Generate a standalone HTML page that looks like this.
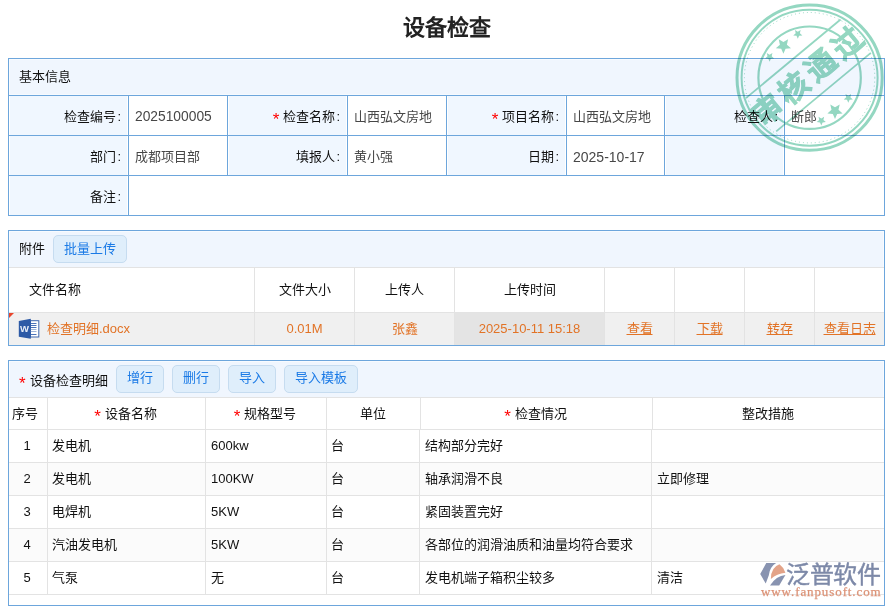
<!DOCTYPE html>
<html lang="zh-CN">
<head>
<meta charset="utf-8">
<style>
*{margin:0;padding:0;box-sizing:border-box;}
html,body{width:890px;height:607px;overflow:hidden;background:#fff;}
body{position:relative;font-family:"Liberation Sans",sans-serif;font-size:13px;color:#333;}
.a{position:absolute;}
.t{position:absolute;white-space:nowrap;line-height:16px;height:16px;margin-top:1px;}
.hl{position:absolute;height:1px;}
.vl{position:absolute;width:1px;}
.b{background:#6da6dc;}
.g{background:#e3e3e3;}
.lab{color:#111;}
.val{color:#474747;}
.req{color:#f00;font-size:17px;position:relative;top:4px;margin-right:4px;line-height:0;}
.btn{position:absolute;height:28px;top:0;border:1px solid #c6dcf0;background:#dfeefb;border-radius:5px;color:#1a7ae6;line-height:24px;text-align:center;font-size:13px;}
.org{color:#e27326;}
i{font-style:normal;margin-left:1px;}
.u{text-decoration:underline;}
</style>
</head>
<body>
<!-- title -->
<div class="t" style="left:0;width:893px;top:14px;height:26px;line-height:26px;text-align:center;font-size:22px;font-weight:bold;color:#222;">设备检查</div>

<!-- ===== panel 1 ===== -->
<div class="a" style="left:8px;top:58px;width:877px;height:158px;border:1px solid #6da6dc;background:#fff;"></div>
<div class="a" style="left:9px;top:59px;width:875px;height:36px;background:#f0f6fe;border:1px solid #f8fbff;border-bottom-color:#f6faff;"></div>
<div class="t lab" style="left:19px;top:68px;">基本信息</div>
<!-- label cells bg -->
<div class="a" style="left:10px;top:96px;width:117px;height:119px;background:#f0f7ff;"></div>
<div class="a" style="left:229px;top:96px;width:117px;height:79px;background:#f0f7ff;"></div>
<div class="a" style="left:448px;top:96px;width:117px;height:79px;background:#f0f7ff;"></div>
<div class="a" style="left:666px;top:96px;width:117px;height:79px;background:#f0f7ff;"></div>
<!-- lines -->
<div class="hl b" style="left:8px;top:95px;width:877px;"></div>
<div class="hl b" style="left:8px;top:135px;width:877px;"></div>
<div class="hl b" style="left:8px;top:175px;width:877px;"></div>
<div class="vl b" style="left:128px;top:95px;height:121px;"></div>
<div class="vl b" style="left:227px;top:95px;height:81px;"></div>
<div class="vl b" style="left:347px;top:95px;height:81px;"></div>
<div class="vl b" style="left:446px;top:95px;height:81px;"></div>
<div class="vl b" style="left:566px;top:95px;height:81px;"></div>
<div class="vl b" style="left:664px;top:95px;height:81px;"></div>
<div class="vl b" style="left:784px;top:95px;height:81px;"></div>
<!-- row1 -->
<div class="t lab" style="right:769px;top:108px;">检查编号<i>:</i></div>
<div class="t val" style="left:135px;top:108px;font-size:13.8px;">2025100005</div>
<div class="t lab" style="right:550px;top:108px;"><span class="req">*</span>检查名称<i>:</i></div>
<div class="t val" style="left:354px;top:108px;">山西弘文房地</div>
<div class="t lab" style="right:331px;top:108px;"><span class="req">*</span>项目名称<i>:</i></div>
<div class="t val" style="left:573px;top:108px;">山西弘文房地</div>
<div class="t lab" style="right:112px;top:108px;">检查人<i>:</i></div>
<div class="t val" style="left:791px;top:108px;">断郎</div>
<!-- row2 -->
<div class="t lab" style="right:769px;top:148px;">部门<i>:</i></div>
<div class="t val" style="left:135px;top:148px;">成都项目部</div>
<div class="t lab" style="right:550px;top:148px;">填报人<i>:</i></div>
<div class="t val" style="left:354px;top:148px;">黄小强</div>
<div class="t lab" style="right:331px;top:148px;">日期<i>:</i></div>
<div class="t val" style="left:573px;top:148px;font-size:14px;">2025-10-17</div>
<!-- row3 -->
<div class="t lab" style="right:769px;top:188px;">备注<i>:</i></div>

<!-- ===== panel 2 ===== -->
<div class="a" style="left:8px;top:230px;width:877px;height:116px;border:1px solid #6da6dc;background:#fff;"></div>
<div class="a" style="left:9px;top:231px;width:875px;height:36px;background:#f0f6fe;border:1px solid #f8fbff;border-bottom:0;"></div>
<div class="t lab" style="left:19px;top:240px;">附件</div>
<div class="btn" style="left:53px;top:235px;width:74px;line-height:26px;">批量上传</div>
<div class="hl g" style="left:9px;top:267px;width:875px;"></div>
<div class="a" style="left:9px;top:313px;width:875px;height:32px;background:#f0f0f0;"></div>
<div class="a" style="left:455px;top:313px;width:149px;height:32px;background:#e4e4e4;"></div>
<div class="hl g" style="left:9px;top:312px;width:875px;"></div>
<div class="vl g" style="left:254px;top:267px;height:78px;"></div>
<div class="vl g" style="left:354px;top:267px;height:78px;"></div>
<div class="vl g" style="left:454px;top:267px;height:78px;"></div>
<div class="vl g" style="left:604px;top:267px;height:78px;"></div>
<div class="vl g" style="left:674px;top:267px;height:78px;"></div>
<div class="vl g" style="left:744px;top:267px;height:78px;"></div>
<div class="vl g" style="left:814px;top:267px;height:78px;"></div>
<div class="t lab" style="left:29px;top:281px;">文件名称</div>
<div class="t lab" style="left:255px;width:99px;text-align:center;top:281px;">文件大小</div>
<div class="t lab" style="left:355px;width:99px;text-align:center;top:281px;">上传人</div>
<div class="t lab" style="left:455px;width:149px;text-align:center;top:281px;">上传时间</div>
<!-- red corner -->
<div class="a" style="left:9px;top:313px;width:0;height:0;border-top:5px solid #e8452c;border-right:5px solid transparent;"></div>
<!-- word icon -->
<svg class="a" style="left:18px;top:317px;" width="22" height="23" viewBox="0 0 22 23">
<rect x="12.5" y="3.7" width="8.3" height="16.3" fill="#fff" stroke="#3f67ad" stroke-width="1"/>
<g stroke="#4a72b8" stroke-width="1"><line x1="12" y1="6.5" x2="18.5" y2="6.5"/><line x1="12" y1="8.5" x2="18.5" y2="8.5"/><line x1="12" y1="10.5" x2="18.5" y2="10.5"/></g>
<g stroke="#9fb4d8" stroke-width="1"><line x1="12" y1="12.5" x2="18.5" y2="12.5"/><line x1="12" y1="14.5" x2="18.5" y2="14.5"/></g>
<line x1="12" y1="17.5" x2="18.5" y2="17.5" stroke="#4a72b8" stroke-width="1"/>
<path d="M0.8 4 L12.8 1.8 L12.8 21.7 L0.8 19.8 Z" fill="#2d5aa6"/>
<text x="6.6" y="15.2" font-family="Liberation Sans" font-weight="bold" font-size="9.5" fill="#e8eef8" text-anchor="middle">W</text>
</svg>
<div class="t org" style="left:47px;top:320px;">检查明细.docx</div>
<div class="t org" style="left:255px;width:99px;text-align:center;top:320px;">0.01M</div>
<div class="t org" style="left:355px;width:99px;text-align:center;top:320px;">张鑫</div>
<div class="t org" style="left:455px;width:149px;text-align:center;top:320px;">2025-10-11 15:18</div>
<div class="t org u" style="left:605px;width:69px;text-align:center;top:320px;">查看</div>
<div class="t org u" style="left:675px;width:69px;text-align:center;top:320px;">下载</div>
<div class="t org u" style="left:745px;width:69px;text-align:center;top:320px;">转存</div>
<div class="t org u" style="left:815px;width:69px;text-align:center;top:320px;">查看日志</div>

<!-- ===== panel 3 ===== -->
<div class="a" style="left:8px;top:360px;width:877px;height:246px;border:1px solid #6da6dc;background:#fff;"></div>
<div class="a" style="left:9px;top:361px;width:875px;height:36px;background:#f0f6fe;border:1px solid #f8fbff;border-bottom:0;"></div>
<div class="t lab" style="left:19px;top:372px;"><span class="req">*</span>设备检查明细</div>
<div class="btn" style="left:116px;top:365px;width:48px;">增行</div>
<div class="btn" style="left:172px;top:365px;width:48px;">删行</div>
<div class="btn" style="left:228px;top:365px;width:48px;">导入</div>
<div class="btn" style="left:284px;top:365px;width:74px;">导入模板</div>
<div class="a" style="left:9px;top:463px;width:875px;height:32px;background:#fbfbfb;"></div>
<div class="a" style="left:9px;top:529px;width:875px;height:32px;background:#fbfbfb;"></div>
<div class="hl g" style="left:9px;top:397px;width:875px;"></div>
<div class="hl g" style="left:9px;top:429px;width:875px;"></div>
<div class="hl g" style="left:9px;top:462px;width:875px;"></div>
<div class="hl g" style="left:9px;top:495px;width:875px;"></div>
<div class="hl g" style="left:9px;top:528px;width:875px;"></div>
<div class="hl g" style="left:9px;top:561px;width:875px;"></div>
<div class="hl g" style="left:9px;top:594px;width:875px;"></div>
<div class="vl g" style="left:47px;top:397px;height:197px;"></div>
<div class="vl g" style="left:205px;top:397px;height:197px;"></div>
<div class="vl g" style="left:326px;top:397px;height:197px;"></div>
<div class="vl g" style="left:420px;top:397px;height:32px;"></div>
<div class="vl g" style="left:652px;top:397px;height:32px;"></div>
<div class="vl g" style="left:419px;top:429px;height:165px;"></div>
<div class="vl g" style="left:651px;top:429px;height:165px;"></div>
<!-- header -->
<div class="t lab" style="left:12px;top:405px;">序号</div>
<div class="t lab" style="left:47px;width:157px;text-align:center;top:405px;"><span class="req">*</span>设备名称</div>
<div class="t lab" style="left:205px;width:120px;text-align:center;top:405px;"><span class="req">*</span>规格型号</div>
<div class="t lab" style="left:326px;width:93px;text-align:center;top:405px;">单位</div>
<div class="t lab" style="left:420px;width:231px;text-align:center;top:405px;"><span class="req">*</span>检查情况</div>
<div class="t lab" style="left:652px;width:231px;text-align:center;top:405px;">整改措施</div>
<!-- rows -->
<div class="t lab" style="left:8px;width:38px;text-align:center;top:437px;">1</div>
<div class="t lab" style="left:52px;top:437px;">发电机</div>
<div class="t lab" style="left:211px;top:437px;">600kw</div>
<div class="t lab" style="left:331px;top:437px;">台</div>
<div class="t lab" style="left:425px;top:437px;">结构部分完好</div>

<div class="t lab" style="left:8px;width:38px;text-align:center;top:470px;">2</div>
<div class="t lab" style="left:52px;top:470px;">发电机</div>
<div class="t lab" style="left:211px;top:470px;">100KW</div>
<div class="t lab" style="left:331px;top:470px;">台</div>
<div class="t lab" style="left:425px;top:470px;">轴承润滑不良</div>
<div class="t lab" style="left:657px;top:470px;">立即修理</div>

<div class="t lab" style="left:8px;width:38px;text-align:center;top:503px;">3</div>
<div class="t lab" style="left:52px;top:503px;">电焊机</div>
<div class="t lab" style="left:211px;top:503px;">5KW</div>
<div class="t lab" style="left:331px;top:503px;">台</div>
<div class="t lab" style="left:425px;top:503px;">紧固装置完好</div>

<div class="t lab" style="left:8px;width:38px;text-align:center;top:536px;">4</div>
<div class="t lab" style="left:52px;top:536px;">汽油发电机</div>
<div class="t lab" style="left:211px;top:536px;">5KW</div>
<div class="t lab" style="left:331px;top:536px;">台</div>
<div class="t lab" style="left:425px;top:536px;">各部位的润滑油质和油量均符合要求</div>

<div class="t lab" style="left:8px;width:38px;text-align:center;top:569px;">5</div>
<div class="t lab" style="left:52px;top:569px;">气泵</div>
<div class="t lab" style="left:211px;top:569px;">无</div>
<div class="t lab" style="left:331px;top:569px;">台</div>
<div class="t lab" style="left:425px;top:569px;">发电机端子箱积尘较多</div>
<div class="t lab" style="left:657px;top:569px;">清洁</div>



<!-- logo -->
<svg class="a" style="left:756px;top:558px;" width="40" height="32" viewBox="0 0 759 607">
<path d="M195,95 L382,95 Q262,165 242,330 L185,485 L80,305 Z" fill="#8893b0"/>
<path d="M282,398 Q282,175 445,118 Q525,175 558,278 Q395,290 282,398 Z" fill="#e3a388"/>
<path d="M265,522 L440,522 L558,322 Q385,335 265,522 Z" fill="#8893b0"/>
</svg>
<div class="t" style="left:786px;top:559px;height:30px;line-height:30px;font-size:24px;font-weight:500;color:#7d89a8;letter-spacing:-0.4px;-webkit-text-stroke:0.4px #7d89a8;">泛普软件</div>
<div class="t" style="left:761px;top:584px;height:14px;line-height:14px;font-family:'Liberation Serif',serif;font-size:13px;font-weight:normal;color:#dc9276;letter-spacing:0.9px;-webkit-text-stroke:0.25px #dc9276;">www.fanpusoft.com</div>
<!-- stamp -->
<svg class="a" style="left:0;top:0;mix-blend-mode:multiply;" width="890" height="607" viewBox="0 0 890 607">
<g fill="none" stroke="#94d7c1">
<circle cx="809.6" cy="77.7" r="72.6" stroke-width="3"/>
<circle cx="809.6" cy="77.7" r="68" stroke-width="2"/>
<circle cx="809.6" cy="77.7" r="65.2" stroke-width="1" stroke-dasharray="1 3"/>
<circle cx="809.6" cy="77.7" r="51.2" stroke-width="2.2"/>
</g>
<g transform="translate(809.6 77.7) rotate(-39.7)">
<line x1="-62" y1="-25" x2="61" y2="-25" stroke="#94d7c1" stroke-width="1.8"/>
<line x1="-60" y1="20" x2="63" y2="20" stroke="#94d7c1" stroke-width="1.8"/>
<text x="1.6" y="8.7" text-anchor="middle" font-family="Liberation Sans" font-weight="bold" font-size="30" letter-spacing="5" fill="#94d7c1" stroke="#94d7c1" stroke-width="0.8">审核通过</text>
</g>
<g fill="#94d7c1">
<path d="M0.000,-1.000 L0.270,-0.372 L0.951,-0.309 L0.437,0.142 L0.588,0.809 L0.000,0.460 L-0.588,0.809 L-0.437,0.142 L-0.951,-0.309 L-0.270,-0.372 Z" transform="translate(783.4 45.8) rotate(180) scale(8)"/>
<path d="M0.000,-1.000 L0.270,-0.372 L0.951,-0.309 L0.437,0.142 L0.588,0.809 L0.000,0.460 L-0.588,0.809 L-0.437,0.142 L-0.951,-0.309 L-0.270,-0.372 Z" transform="translate(797.8 33.9) rotate(180) scale(4.8)"/>
<path d="M0.000,-1.000 L0.270,-0.372 L0.951,-0.309 L0.437,0.142 L0.588,0.809 L0.000,0.460 L-0.588,0.809 L-0.437,0.142 L-0.951,-0.309 L-0.270,-0.372 Z" transform="translate(769.6 56.9) rotate(180) scale(4.8)"/>
<path d="M0.000,-1.000 L0.270,-0.372 L0.951,-0.309 L0.437,0.142 L0.588,0.809 L0.000,0.460 L-0.588,0.809 L-0.437,0.142 L-0.951,-0.309 L-0.270,-0.372 Z" transform="translate(835 111) rotate(180) scale(8)"/>
<path d="M0.000,-1.000 L0.270,-0.372 L0.951,-0.309 L0.437,0.142 L0.588,0.809 L0.000,0.460 L-0.588,0.809 L-0.437,0.142 L-0.951,-0.309 L-0.270,-0.372 Z" transform="translate(848.3 98) rotate(180) scale(4.8)"/>
<path d="M0.000,-1.000 L0.270,-0.372 L0.951,-0.309 L0.437,0.142 L0.588,0.809 L0.000,0.460 L-0.588,0.809 L-0.437,0.142 L-0.951,-0.309 L-0.270,-0.372 Z" transform="translate(821.3 120.6) rotate(180) scale(4.8)"/>
</g>
</svg>
</body>
</html>
